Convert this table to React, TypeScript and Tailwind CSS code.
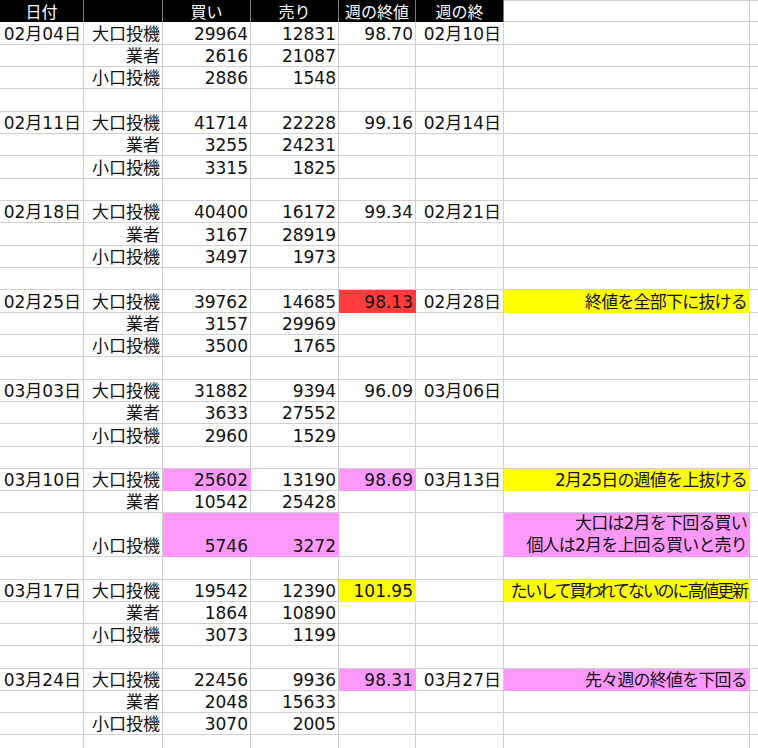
import React from "react";

type Fill = "red" | "pink" | "yellow";

type Row = {
  h: string;
  date?: string;
  kind?: string;
  buy?: string;
  sell?: string;
  close?: string;
  end?: string;
  note?: string[];
  fills?: { buy?: Fill; sell?: Fill; close?: Fill; note?: Fill };
};

const fillClass: Record<Fill, string> = {
  red: "bg-[#ff3b3b] border-[#ff3b3b]",
  pink: "bg-[#ff99ff] border-[#ff99ff]",
  yellow: "bg-[#ffff00] border-[#ffff00]",
};

// row heights follow the sheet's 22.33px rhythm
const rows: Row[] = [
  { h: "h-[23px]", date: "02月04日", kind: "大口投機", buy: "29964", sell: "12831", close: "98.70", end: "02月10日" },
  { h: "h-[22px]", kind: "業者", buy: "2616", sell: "21087" },
  { h: "h-[22px]", kind: "小口投機", buy: "2886", sell: "1548" },
  { h: "h-[23px]" },
  { h: "h-[22px]", date: "02月11日", kind: "大口投機", buy: "41714", sell: "22228", close: "99.16", end: "02月14日" },
  { h: "h-[22px]", kind: "業者", buy: "3255", sell: "24231" },
  { h: "h-[23px]", kind: "小口投機", buy: "3315", sell: "1825" },
  { h: "h-[22px]" },
  { h: "h-[22px]", date: "02月18日", kind: "大口投機", buy: "40400", sell: "16172", close: "99.34", end: "02月21日" },
  { h: "h-[23px]", kind: "業者", buy: "3167", sell: "28919" },
  { h: "h-[22px]", kind: "小口投機", buy: "3497", sell: "1973" },
  { h: "h-[22px]" },
  {
    h: "h-[23px]", date: "02月25日", kind: "大口投機", buy: "39762", sell: "14685", close: "98.13", end: "02月28日",
    note: ["終値を全部下に抜ける"], fills: { close: "red", note: "yellow" },
  },
  { h: "h-[22px]", kind: "業者", buy: "3157", sell: "29969" },
  { h: "h-[22px]", kind: "小口投機", buy: "3500", sell: "1765" },
  { h: "h-[23px]" },
  { h: "h-[22px]", date: "03月03日", kind: "大口投機", buy: "31882", sell: "9394", close: "96.09", end: "03月06日" },
  { h: "h-[22px]", kind: "業者", buy: "3633", sell: "27552" },
  { h: "h-[23px]", kind: "小口投機", buy: "2960", sell: "1529" },
  { h: "h-[22px]" },
  {
    h: "h-[22px]", date: "03月10日", kind: "大口投機", buy: "25602", sell: "13190", close: "98.69", end: "03月13日",
    note: ["2月25日の週値を上抜ける"], fills: { buy: "pink", close: "pink", note: "yellow" },
  },
  { h: "h-[22px]", kind: "業者", buy: "10542", sell: "25428" },
  {
    h: "h-[44px]", kind: "小口投機", buy: "5746", sell: "3272",
    note: ["大口は2月を下回る買い", "個人は2月を上回る買いと売り"], fills: { buy: "pink", sell: "pink", note: "pink" },
  },
  { h: "h-[23px]" },
  {
    h: "h-[22px]", date: "03月17日", kind: "大口投機", buy: "19542", sell: "12390", close: "101.95",
    note: ["たいして買われてないのに高値更新"], fills: { close: "yellow", note: "yellow" },
  },
  { h: "h-[22px]", kind: "業者", buy: "1864", sell: "10890" },
  { h: "h-[22px]", kind: "小口投機", buy: "3073", sell: "1199" },
  { h: "h-[23px]" },
  {
    h: "h-[22px]", date: "03月24日", kind: "大口投機", buy: "22456", sell: "9936", close: "98.31", end: "03月27日",
    note: ["先々週の終値を下回る"], fills: { close: "pink", note: "pink" },
  },
  { h: "h-[22px]", kind: "業者", buy: "2048", sell: "15633" },
  { h: "h-[22px]", kind: "小口投機", buy: "3070", sell: "2005" },
  { h: "h-[22px]" },
];

const cols = "grid grid-cols-[84px_79px_88px_88px_77px_88px_246px_8px]";

function Cell({ children, fill, lines }: { children?: React.ReactNode; fill?: Fill; lines?: boolean }) {
  return (
    <div
      className={`flex flex-col items-end justify-end border-r border-b pr-[2px] text-right whitespace-nowrap overflow-hidden ${
        lines ? "leading-[22px]" : "leading-[20px]"
      } ${fill ? fillClass[fill] : "border-[#d0d0d0]"}`}
    >
      {children}
    </div>
  );
}

export default function App() {
  return (
    <div
      className="h-[748px] w-[758px] overflow-hidden bg-white text-[17px] text-[#111]"
      style={{ fontFamily: '"DejaVu Sans", "Noto Sans CJK JP", sans-serif' }}
    >
      <div className={`${cols} h-[22px]`}>
        {["日付", "", "買い", "売り", "週の終値", "週の終"].map((t, i) => (
          <div
            key={i}
            className="flex items-center justify-center border-r border-[#7a7a7a] bg-black text-[16px] leading-none text-white"
            style={{ fontFamily: '"Noto Sans CJK JP", sans-serif' }}
          >
            {t}
          </div>
        ))}
        <div className="border-t border-r border-b border-[#d0d0d0]" />
        <div className="border-t border-b border-[#d0d0d0]" />
      </div>
      {rows.map((r, i) => (
        <div key={i} className={`${cols} ${r.h}`}>
          <Cell>{r.date}</Cell>
          <Cell>{r.kind}</Cell>
          <Cell fill={r.fills?.buy}>{r.buy}</Cell>
          <Cell fill={r.fills?.sell}>{r.sell}</Cell>
          <Cell fill={r.fills?.close}>{r.close}</Cell>
          <Cell>{r.end}</Cell>
          <Cell fill={r.fills?.note} lines={(r.note?.length ?? 0) > 1}>
            {r.note?.map((l) => (
              <span key={l} className={l.length > 14 ? "tracking-[-2.1px]" : "tracking-[-0.8px]"}>
                {l}
              </span>
            ))}
          </Cell>
          <div className="border-b border-[#d0d0d0]" />
        </div>
      ))}
    </div>
  );
}
